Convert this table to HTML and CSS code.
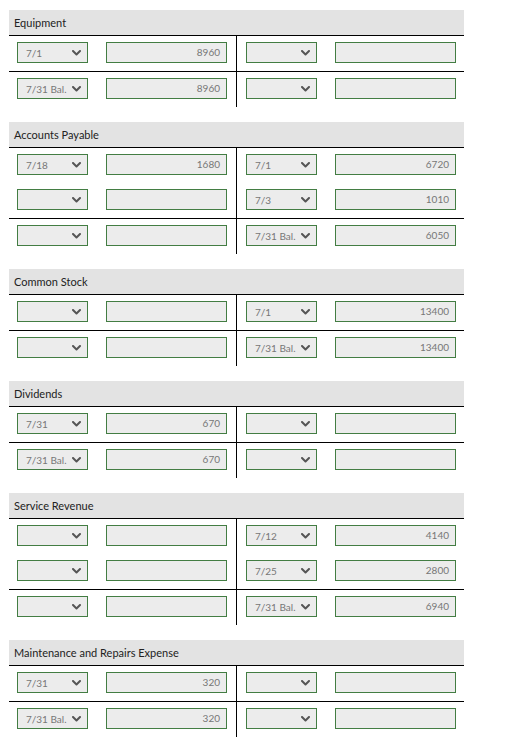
FILE: index.html
```html
<!DOCTYPE html>
<html>
<head>
<meta charset="utf-8">
<link rel="stylesheet" href="styles.css">
</head>
<body>
<div class="ledger">

  <section class="account">
    <div class="acct-head">Equipment</div>
    <div class="row">
      <div class="side debit">
        <div class="sel"><span>7/1</span><svg class="chev" viewBox="0 0 9 6"><polyline points="1,1 4.5,4.5 8,1"/></svg></div>
        <div class="amt">8960</div>
      </div>
      <div class="side credit">
        <div class="sel"><span></span><svg class="chev" viewBox="0 0 9 6"><polyline points="1,1 4.5,4.5 8,1"/></svg></div>
        <div class="amt"></div>
      </div>
    </div>
    <div class="row bal">
      <div class="side debit">
        <div class="sel"><span>7/31 Bal.</span><svg class="chev" viewBox="0 0 9 6"><polyline points="1,1 4.5,4.5 8,1"/></svg></div>
        <div class="amt">8960</div>
      </div>
      <div class="side credit">
        <div class="sel"><span></span><svg class="chev" viewBox="0 0 9 6"><polyline points="1,1 4.5,4.5 8,1"/></svg></div>
        <div class="amt"></div>
      </div>
    </div>
  </section>

  <section class="account">
    <div class="acct-head">Accounts Payable</div>
    <div class="row">
      <div class="side debit">
        <div class="sel"><span>7/18</span><svg class="chev" viewBox="0 0 9 6"><polyline points="1,1 4.5,4.5 8,1"/></svg></div>
        <div class="amt">1680</div>
      </div>
      <div class="side credit">
        <div class="sel"><span>7/1</span><svg class="chev" viewBox="0 0 9 6"><polyline points="1,1 4.5,4.5 8,1"/></svg></div>
        <div class="amt">6720</div>
      </div>
    </div>
    <div class="row">
      <div class="side debit">
        <div class="sel"><span></span><svg class="chev" viewBox="0 0 9 6"><polyline points="1,1 4.5,4.5 8,1"/></svg></div>
        <div class="amt"></div>
      </div>
      <div class="side credit">
        <div class="sel"><span>7/3</span><svg class="chev" viewBox="0 0 9 6"><polyline points="1,1 4.5,4.5 8,1"/></svg></div>
        <div class="amt">1010</div>
      </div>
    </div>
    <div class="row bal">
      <div class="side debit">
        <div class="sel"><span></span><svg class="chev" viewBox="0 0 9 6"><polyline points="1,1 4.5,4.5 8,1"/></svg></div>
        <div class="amt"></div>
      </div>
      <div class="side credit">
        <div class="sel"><span>7/31 Bal.</span><svg class="chev" viewBox="0 0 9 6"><polyline points="1,1 4.5,4.5 8,1"/></svg></div>
        <div class="amt">6050</div>
      </div>
    </div>
  </section>

  <section class="account">
    <div class="acct-head">Common Stock</div>
    <div class="row">
      <div class="side debit">
        <div class="sel"><span></span><svg class="chev" viewBox="0 0 9 6"><polyline points="1,1 4.5,4.5 8,1"/></svg></div>
        <div class="amt"></div>
      </div>
      <div class="side credit">
        <div class="sel"><span>7/1</span><svg class="chev" viewBox="0 0 9 6"><polyline points="1,1 4.5,4.5 8,1"/></svg></div>
        <div class="amt">13400</div>
      </div>
    </div>
    <div class="row bal">
      <div class="side debit">
        <div class="sel"><span></span><svg class="chev" viewBox="0 0 9 6"><polyline points="1,1 4.5,4.5 8,1"/></svg></div>
        <div class="amt"></div>
      </div>
      <div class="side credit">
        <div class="sel"><span>7/31 Bal.</span><svg class="chev" viewBox="0 0 9 6"><polyline points="1,1 4.5,4.5 8,1"/></svg></div>
        <div class="amt">13400</div>
      </div>
    </div>
  </section>

  <section class="account">
    <div class="acct-head">Dividends</div>
    <div class="row">
      <div class="side debit">
        <div class="sel"><span>7/31</span><svg class="chev" viewBox="0 0 9 6"><polyline points="1,1 4.5,4.5 8,1"/></svg></div>
        <div class="amt">670</div>
      </div>
      <div class="side credit">
        <div class="sel"><span></span><svg class="chev" viewBox="0 0 9 6"><polyline points="1,1 4.5,4.5 8,1"/></svg></div>
        <div class="amt"></div>
      </div>
    </div>
    <div class="row bal">
      <div class="side debit">
        <div class="sel"><span>7/31 Bal.</span><svg class="chev" viewBox="0 0 9 6"><polyline points="1,1 4.5,4.5 8,1"/></svg></div>
        <div class="amt">670</div>
      </div>
      <div class="side credit">
        <div class="sel"><span></span><svg class="chev" viewBox="0 0 9 6"><polyline points="1,1 4.5,4.5 8,1"/></svg></div>
        <div class="amt"></div>
      </div>
    </div>
  </section>

  <section class="account">
    <div class="acct-head">Service Revenue</div>
    <div class="row">
      <div class="side debit">
        <div class="sel"><span></span><svg class="chev" viewBox="0 0 9 6"><polyline points="1,1 4.5,4.5 8,1"/></svg></div>
        <div class="amt"></div>
      </div>
      <div class="side credit">
        <div class="sel"><span>7/12</span><svg class="chev" viewBox="0 0 9 6"><polyline points="1,1 4.5,4.5 8,1"/></svg></div>
        <div class="amt">4140</div>
      </div>
    </div>
    <div class="row">
      <div class="side debit">
        <div class="sel"><span></span><svg class="chev" viewBox="0 0 9 6"><polyline points="1,1 4.5,4.5 8,1"/></svg></div>
        <div class="amt"></div>
      </div>
      <div class="side credit">
        <div class="sel"><span>7/25</span><svg class="chev" viewBox="0 0 9 6"><polyline points="1,1 4.5,4.5 8,1"/></svg></div>
        <div class="amt">2800</div>
      </div>
    </div>
    <div class="row bal">
      <div class="side debit">
        <div class="sel"><span></span><svg class="chev" viewBox="0 0 9 6"><polyline points="1,1 4.5,4.5 8,1"/></svg></div>
        <div class="amt"></div>
      </div>
      <div class="side credit">
        <div class="sel"><span>7/31 Bal.</span><svg class="chev" viewBox="0 0 9 6"><polyline points="1,1 4.5,4.5 8,1"/></svg></div>
        <div class="amt">6940</div>
      </div>
    </div>
  </section>

  <section class="account">
    <div class="acct-head">Maintenance and Repairs Expense</div>
    <div class="row">
      <div class="side debit">
        <div class="sel"><span>7/31</span><svg class="chev" viewBox="0 0 9 6"><polyline points="1,1 4.5,4.5 8,1"/></svg></div>
        <div class="amt">320</div>
      </div>
      <div class="side credit">
        <div class="sel"><span></span><svg class="chev" viewBox="0 0 9 6"><polyline points="1,1 4.5,4.5 8,1"/></svg></div>
        <div class="amt"></div>
      </div>
    </div>
    <div class="row bal">
      <div class="side debit">
        <div class="sel"><span>7/31 Bal.</span><svg class="chev" viewBox="0 0 9 6"><polyline points="1,1 4.5,4.5 8,1"/></svg></div>
        <div class="amt">320</div>
      </div>
      <div class="side credit">
        <div class="sel"><span></span><svg class="chev" viewBox="0 0 9 6"><polyline points="1,1 4.5,4.5 8,1"/></svg></div>
        <div class="amt"></div>
      </div>
    </div>
  </section>

</div>
</body>
</html>
```

FILE: styles.css
```css
* { box-sizing: border-box; }

body {
  margin: 0;
  background: #ffffff;
  font-family: Lato, "Open Sans", "Liberation Sans", sans-serif;
}

.ledger {
  padding: 10px 0 0 9px;
  width: 464px;
}

.account + .account {
  margin-top: 15px;
}

.acct-head {
  height: 26px;
  background: #e3e3e3;
  border-bottom: 1px solid #000;
  padding-left: 5px;
  font-size: 11px;
  line-height: 25px;
  color: #222;
}

.row {
  display: flex;
  height: 35px;
}

.row.bal {
  height: 36px;
  border-top: 1px solid #000;
}

.side {
  display: flex;
  align-items: flex-start;
  padding-top: 6px;
  gap: 18px;
}

.debit {
  width: 228px;
  padding-left: 8px;
  border-right: 1px solid #000;
}

.credit {
  width: 227px;
  padding-left: 9px;
}

.sel {
  width: 71px;
  height: 21px;
  border: 1px solid #437d43;
  background: #ececec;
  display: flex;
  align-items: center;
  justify-content: space-between;
  padding: 0 6px 0 8px;
  font-size: 10px;
  color: #777;
}

.sel span {
  white-space: nowrap;
}

.chev {
  width: 9px;
  height: 6px;
  flex: none;
}

.chev polyline {
  fill: none;
  stroke: #555;
  stroke-width: 2;
  stroke-linecap: round;
  stroke-linejoin: round;
}

.amt {
  width: 121px;
  height: 21px;
  border: 1px solid #437d43;
  background: #ececec;
  text-align: right;
  padding-right: 6px;
  font-size: 10px;
  line-height: 19px;
  color: #777;
}
```
